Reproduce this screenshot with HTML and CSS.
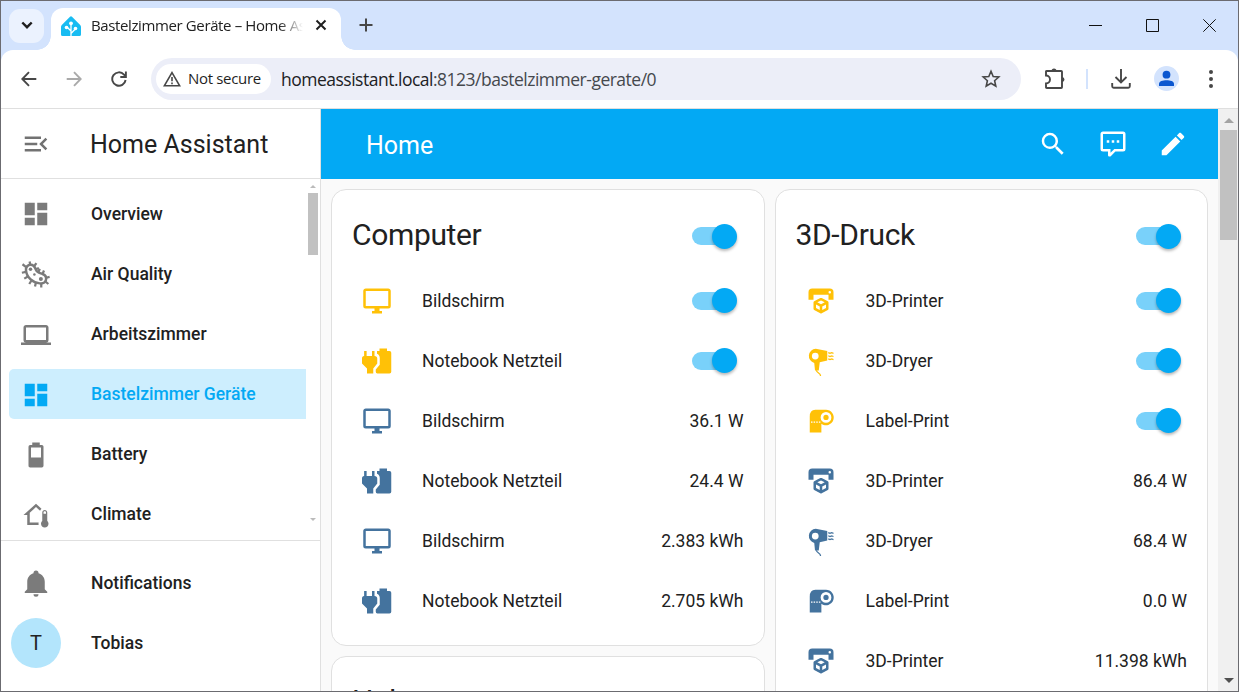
FILE: index.html
```html
<!DOCTYPE html>
<html lang="en">
<head>
<meta charset="utf-8">
<title>Bastelzimmer Geräte – Home Assistant</title>
<link rel="stylesheet" href="styles.css">
</head>
<body>
<svg class="defs" aria-hidden="true">
  <symbol id="dashboard" viewBox="0 0 24 24"><path d="M13,3V9H21V3M13,21H21V11H13M3,21H11V15H3M3,13H11V3H3V13Z"/></symbol>
  <symbol id="monitor" viewBox="0 0 24 24"><path d="M21,16H3V4H21M21,2H3C1.89,2 1,2.89 1,4V16A2,2 0 0,0 3,18H10V20H8V22H16V20H14V18H21A2,2 0 0,0 23,16V4C23,2.89 22.1,2 21,2Z"/></symbol>
  <symbol id="plug" viewBox="0 0 24 24"><path d="M1.7 4H3.7V8H8V4H10V8C11.4 8 12.2 8.8 12.2 10V14L9 18V22H4V18L0 14V10C0 8.8 .5 8 1.7 8Z"/><path d="M14 4V2H20V4H22Q23.4 4 23.4 5.4V20.6Q23.4 22 22 22H12.3Q11 22 11 20.6V18.8L14.2 15V9.5C14.2 7.8 13.2 6.7 12 6.2V4Z"/></symbol>
  <symbol id="printer" viewBox="0 0 24 24"><path d="M19,6A1,1 0 0,0 20,5A1,1 0 0,0 19,4A1,1 0 0,0 18,5A1,1 0 0,0 19,6M19,2A3,3 0 0,1 22,5V11H18V7H6V11H2V5A3,3 0 0,1 5,2H19M18,18.25C18,18.63 17.79,18.96 17.47,19.13L12.57,21.82C12.4,21.94 12.21,22 12,22C11.79,22 11.59,21.94 11.43,21.82L6.53,19.13C6.21,18.96 6,18.63 6,18.25V13C6,12.62 6.21,12.29 6.53,12.12L11.43,9.68C11.59,9.56 11.79,9.5 12,9.5C12.21,9.5 12.4,9.56 12.57,9.68L17.47,12.12C17.79,12.29 18,12.62 18,13V18.25M12,11.65L9.04,13L12,14.6L14.96,13L12,11.65M8,17.66L11,19.29V16.33L8,14.71V17.66M16,17.66V14.71L13,16.33V19.29L16,17.66Z"/></symbol>
  <symbol id="dryer" viewBox="0 0 24 24"><path fill-rule="evenodd" d="M7.8 2.2L17 4V11.5L11 13L10.2 19.6H7.2L6.6 13.6A5.8 5.8 0 0 1 7.8 2.2M7.4 5.3A2.7 2.7 0 1 0 7.4 10.7A2.7 2.7 0 1 0 7.4 5.3"/><path class="line" d="M8.3 19.4C8.2 21.5 11.6 21.4 11.7 24M17.8 5.3l1.4.6 1.3-.5 1.5.5M17.8 7.8l1.4.6 1.3-.5 1.5.5M17.8 10.3l1.4.6 1.3-.5 1.5.5"/></symbol>
  <symbol id="roll" viewBox="0 0 24 24"><path fill-rule="evenodd" d="M7.5 3H16A6.2 6.2 0 1 1 12.3 14.2V21.2H3V8.5Q3 3 7.5 3M16 4.8A4.3 4.3 0 1 0 16 13.4A4.3 4.3 0 1 0 16 4.8M4 12.3V13.3H5.2V12.3M6.1 12.3V13.3H7.3V12.3M8.2 12.3V13.3H9.4V12.3M10.3 12.3V13.3H11.5V12.3"/><circle cx="16" cy="9.1" r="2.1"/></symbol>
</svg>

<div class="window">
  <header class="tabstrip">
    <button class="tab-search"><svg viewBox="0 0 14 14"><path d="M2.3 4.5L7 9.2L11.7 4.5"/></svg></button>
    <div class="tab">
      <svg class="favicon" viewBox="0 0 20 20"><path fill="#18bcf2" d="M10 .2Q10.6.2 11 .7L19.2 9Q20 10 20 11V18.5Q20 20 18.5 20H1.5Q0 20 0 18.5V11Q0 10 .8 9L9 .7Q9.4.2 10 .2"/><g fill="none" stroke="#fff" stroke-width="1.3"><path d="M10 20V7.5M10 15L5.7 10.8M10 17.5L14.3 13"/></g><g fill="#fff"><circle cx="10" cy="7.3" r="1.9"/><circle cx="5.5" cy="11.5" r="1.8"/><circle cx="14.5" cy="12.5" r="1.8"/></g></svg>
      <span class="tab-title">Bastelzimmer Geräte – Home Assistant</span>
      <svg class="tab-close" viewBox="0 0 12 12"><path d="M1.5 1.5L10.5 10.5M10.5 1.5L1.5 10.5"/></svg>
    </div>
    <svg class="new-tab" viewBox="0 0 14 14"><path d="M7 .5V13.5M.5 7H13.5"/></svg>
    <div class="win-controls">
      <svg viewBox="0 0 13 13"><path d="M0 6.5H13"/></svg>
      <svg viewBox="0 0 13 13"><path d="M.5 .5H12.5V12.5H.5Z"/></svg>
      <svg viewBox="0 0 13 13"><path d="M.3 .3L12.7 12.7M12.7 .3L.3 12.7"/></svg>
    </div>
  </header>

  <div class="toolbar">
    <svg class="nav" viewBox="0 0 16 16"><path d="M15.3 8H1.5M8 1.2L1.3 8L8 14.8"/></svg>
    <svg class="nav dim" viewBox="0 0 16 16"><path d="M.7 8H14.5M8 1.2L14.7 8L8 14.8"/></svg>
    <svg class="nav" viewBox="0 0 16 16"><path d="M14.6 9A6.7 6.7 0 1 1 13 3.6L14.6 5.4M14.9 .6V6H9.3"/></svg>
    <div class="omnibox">
      <div class="chip"><svg viewBox="0 0 18 16"><path d="M9 1.6L16.7 14.8H1.3ZM9 6V10.3M9 11.6V13.2"/></svg><span>Not secure</span></div>
      <span class="url">homeassistant.local<span>:8123/bastelzimmer-gerate/0</span></span>
      <svg class="star" viewBox="0 0 20 20"><path d="M10 2.3L12.2 7.5L17.8 8L13.6 11.7L14.8 17.2L10 14.3L5.2 17.2L6.4 11.7L2.2 8L7.8 7.5Z"/></svg>
    </div>
    <svg class="puzzle" viewBox="0 0 22 22"><path d="M2 3.5Q2 3 2.8 3H17.2Q18 3 18 3.8V19.2Q18 20 17.2 20H2.8Q2 20 2 19.2V15.5A4 4 0 0 0 2 7.5Z"/><path class="solid" d="M7.5 3A2.4 2.4 0 0 1 12.5 3M18 9A2.5 2.5 0 0 1 18 14"/></svg>
    <i class="divider"></i>
    <svg class="download" viewBox="0 0 20 20"><path d="M10 0V13M4.5 8L10 13.4L15.5 8M1.2 14V17.3Q1.2 18.8 2.7 18.8H17.3Q18.8 18.8 18.8 17.3V14"/></svg>
    <svg class="profile" viewBox="0 0 25 25"><circle cx="12.5" cy="12.5" r="12.5" fill="#d3e3fd"/><circle cx="12.5" cy="8.7" r="3.9"/><path d="M5 20V17.6C5 13 20 13 20 17.6V20Z"/></svg>
    <svg class="kebab" viewBox="0 0 4 18"><circle cx="2" cy="2" r="2"/><circle cx="2" cy="9" r="2"/><circle cx="2" cy="16" r="2"/></svg>
  </div>

  <div class="page">
    <aside class="sidebar">
      <div class="brand"><svg class="icon" viewBox="0 0 24 24"><path d="M21,15.61L19.59,17L14.58,12L19.59,7L21,8.39L17.44,12L21,15.61M3,6H16V8H3V6M3,13V11H13V13H3M3,18V16H16V18H3Z"/></svg><span>Home Assistant</span></div>
      <div class="menu">
        <nav class="items">
          <a class="item"><svg class="icon"><use href="#dashboard"/></svg>Overview</a>
          <a class="item"><svg class="icon bacteria" viewBox="0 0 24 24"><path class="outline" d="M4.8 9.3C4.4 6.4 6.2 4.6 8.5 4.6C11.4 4.6 12.1 6.8 12.9 8.9S15.5 11.1 18 12S21.3 15 20.7 17S18.2 19.8 15.8 19.5C10.3 18.9 5.5 15 4.8 9.3Z"/><path class="spikes" d="M8.2 4.7L7.7 2M11.3 5.8L13.1 3.3M4.9 6.5L2 4.2M4.7 10.3L1.5 11M6.3 14L3.4 15.7M9.2 17.2L7.4 20M12.7 19L12 22M17 19.6V22.7M20.3 18L22.7 20M20.9 15L23.7 14.3M18 12L19.2 9.2M14.7 10.7L15.8 7.8M12.7 8.2L15.1 7.2"/><circle cx="8.4" cy="8.2" r="1.4"/><circle cx="16.7" cy="16" r="1.6"/><circle cx="11.5" cy="12.3" r="1"/></svg>Air Quality</a>
          <a class="item"><svg class="icon" viewBox="0 0 24 24"><path d="M4,6H20V16H4M20,18A2,2 0 0,0 22,16V6C22,4.89 21.1,4 20,4H4C2.89,4 2,4.89 2,6V16A2,2 0 0,0 4,18H0V20H24V18H20Z"/></svg>Arbeitszimmer</a>
          <a class="item selected"><svg class="icon"><use href="#dashboard"/></svg>Bastelzimmer Geräte</a>
          <a class="item"><svg class="icon" viewBox="0 0 24 24"><path d="M16,14H8V6H16M16.67,4H15V2H9V4H7.33A1.33,1.33 0 0,0 6,5.33V20.67C6,21.4 6.6,22 7.33,22H16.67A1.33,1.33 0 0,0 18,20.67V5.33C18,4.6 17.4,4 16.67,4Z"/></svg>Battery</a>
          <a class="item"><svg class="icon" viewBox="0 0 24 24"><path d="M19 8C20.11 8 21 8.9 21 10V16.76C21.61 17.31 22 18.11 22 19C22 20.66 20.66 22 19 22C17.34 22 16 20.66 16 19C16 18.11 16.39 17.31 17 16.76V10C17 8.9 17.9 8 19 8M19 9C18.45 9 18 9.45 18 10V11H20V10C20 9.45 19.55 9 19 9M5 20V12H2L12 3L16.4 6.96C15.89 7.4 15.5 7.97 15.25 8.61L12 5.69L7 10.19V18H14.1L14 19L14.1 20H5Z"/></svg>Climate</a>
        </nav>
        <div class="mini-scroll"><i class="up"></i><i class="thumb"></i><i class="down"></i></div>
      </div>
      <nav class="items footer">
        <a class="item"><svg class="icon" viewBox="0 0 24 24"><path d="M21,19V20H3V19L5,17V11C5,7.9 7.03,5.17 10,4.29C10,4.19 10,4.1 10,4A2,2 0 0,1 12,2A2,2 0 0,1 14,4C14,4.1 14,4.19 14,4.29C16.97,5.17 19,7.9 19,11V17L21,19M14,21A2,2 0 0,1 12,23A2,2 0 0,1 10,21"/></svg>Notifications</a>
        <a class="item user"><span class="avatar">T</span>Tobias</a>
      </nav>
    </aside>

    <main class="main">
      <div class="appbar">
        <span class="view">Home</span>
        <svg class="icon" viewBox="0 0 24 24"><path d="M9.5,3A6.5,6.5 0 0,1 16,9.5C16,11.11 15.41,12.59 14.44,13.73L14.71,14H15.5L20.5,19L19,20.5L14,15.5V14.71L13.73,14.44C12.59,15.41 11.11,16 9.5,16A6.5,6.5 0 0,1 3,9.5A6.5,6.5 0 0,1 9.5,3M9.5,5C7,5 5,7 5,9.5C5,12 7,14 9.5,14C12,14 14,12 14,9.5C14,7 12,5 9.5,5Z"/></svg>
        <svg class="icon" viewBox="0 0 24 24"><path d="M9,22A1,1 0 0,1 8,21V18H4A2,2 0 0,1 2,16V4C2,2.89 2.9,2 4,2H20A2,2 0 0,1 22,4V16A2,2 0 0,1 20,18H13.9L10.2,21.71C10,21.9 9.75,22 9.5,22V22H9M10,16V19.08L13.08,16H20V4H4V16H10M17,11H15V9H17V11M13,11H11V9H13V11M9,11H7V9H9V11Z"/></svg>
        <svg class="icon" viewBox="0 0 24 24"><path d="M20.71,7.04C21.1,6.65 21.1,6 20.71,5.63L18.37,3.29C18,2.9 17.35,2.9 16.96,3.29L15.12,5.12L18.87,8.87M3,17.25V21H6.75L17.81,9.93L14.06,6.18L3,17.25Z"/></svg>
      </div>
      <div class="columns">
        <div class="column">
          <section class="card">
            <h2><span>Computer</span><i class="toggle"></i></h2>
            <div class="row on"><svg class="icon"><use href="#monitor"/></svg><span>Bildschirm</span><i class="toggle"></i></div>
            <div class="row on"><svg class="icon"><use href="#plug"/></svg><span>Notebook Netzteil</span><i class="toggle"></i></div>
            <div class="row"><svg class="icon"><use href="#monitor"/></svg><span>Bildschirm</span><b>36.1 W</b></div>
            <div class="row"><svg class="icon"><use href="#plug"/></svg><span>Notebook Netzteil</span><b>24.4 W</b></div>
            <div class="row"><svg class="icon"><use href="#monitor"/></svg><span>Bildschirm</span><b>2.383 kWh</b></div>
            <div class="row"><svg class="icon"><use href="#plug"/></svg><span>Notebook Netzteil</span><b>2.705 kWh</b></div>
          </section>
          <section class="card">
            <h2 class="plain"><span>Hub</span></h2>
          </section>
        </div>
        <div class="column">
          <section class="card">
            <h2><span>3D-Druck</span><i class="toggle"></i></h2>
            <div class="row on"><svg class="icon"><use href="#printer"/></svg><span>3D-Printer</span><i class="toggle"></i></div>
            <div class="row on"><svg class="icon"><use href="#dryer"/></svg><span>3D-Dryer</span><i class="toggle"></i></div>
            <div class="row on"><svg class="icon"><use href="#roll"/></svg><span>Label-Print</span><i class="toggle"></i></div>
            <div class="row"><svg class="icon"><use href="#printer"/></svg><span>3D-Printer</span><b>86.4 W</b></div>
            <div class="row"><svg class="icon"><use href="#dryer"/></svg><span>3D-Dryer</span><b>68.4 W</b></div>
            <div class="row"><svg class="icon"><use href="#roll"/></svg><span>Label-Print</span><b>0.0 W</b></div>
            <div class="row"><svg class="icon"><use href="#printer"/></svg><span>3D-Printer</span><b>11.398 kWh</b></div>
          </section>
        </div>
      </div>
    </main>
    <div class="scrollbar"><i class="up"></i><i class="thumb"></i><i class="down"></i></div>
  </div>
</div>
</body>
</html>
```
FILE: styles.css
```css
* { box-sizing: border-box; }
body { margin: 0; overflow: hidden; font-family: Roboto, sans-serif; color: #212121; }
svg { display: block; flex: none; }
.defs { display: none; }
.window { height: 692px; border: 1px solid #6b6b70; display: flex; flex-direction: column; overflow: hidden; background: #d3e3fd; }

/* Browser tab strip */
.tabstrip { height: 49px; flex: none; display: flex; align-items: center; padding-left: 8px; font-family: "Open Sans", sans-serif; }
.tab-search { width: 35px; height: 34px; border: 0; border-radius: 11px; background: #ebf2fe; padding: 0; display: flex; align-items: center; justify-content: center; }
.tab-search svg { width: 14px; height: 14px; margin-bottom: 2px; fill: none; stroke: #1f1f1f; stroke-width: 2.4; }
.tab { position: relative; width: 290px; height: 42px; align-self: flex-end; margin-left: 7px; border-radius: 12px 12px 0 0; background: #fff; display: flex; align-items: center; padding: 0 14px 7px 10px; }
.tab::before, .tab::after { content: ""; position: absolute; bottom: 0; width: 14px; height: 14px; }
.tab::before { left: -14px; background: radial-gradient(circle at 0 0, transparent 13.5px, #fff 14px); }
.tab::after { right: -14px; background: radial-gradient(circle at 100% 0, transparent 13.5px, #fff 14px); }
.favicon { width: 20px; height: 20px; }
.tab-title { width: 212px; margin: 0 0 1px 10px; font-size: 15px; letter-spacing: -.38px; overflow: hidden; white-space: nowrap; -webkit-mask-image: linear-gradient(90deg, #000 188px, transparent 212px); mask-image: linear-gradient(90deg, #000 188px, transparent 212px); }
.tab-close { width: 12px; height: 12px; margin: 0 0 1px 12px; fill: none; stroke: #1f1f1f; stroke-width: 2; }
.new-tab { width: 14px; height: 14px; margin: 0 0 1px 18px; fill: none; stroke: #474747; stroke-width: 2; }
.win-controls { margin-left: auto; display: flex; gap: 44px; padding-right: 22px; }
.win-controls svg { width: 13px; height: 13px; fill: none; stroke: #111; }

/* Browser toolbar */
.toolbar { height: 59px; flex: none; background: #fff; border-bottom: 1px solid #dfdfdf; border-radius: 12px 12px 0 0; display: flex; align-items: center; padding: 0 25px 0 20px; font-family: "Open Sans", sans-serif; }
.toolbar > svg, .chip svg, .star { fill: none; stroke: #474747; stroke-width: 1.9; }
.nav { width: 16px; height: 16px; margin-right: 29px; }
.toolbar > .dim { stroke: #aaa; }
.omnibox { width: 870px; height: 42px; margin-left: -5px; border-radius: 21px; background: #eceef8; display: flex; align-items: center; padding: 0 20px 0 5px; }
.chip { width: 115px; height: 30px; border-radius: 15px; background: #fff; display: flex; align-items: center; padding-left: 7px; font-size: 15px; font-weight: 500; color: #1f1f1f; }
.chip svg { width: 18px; height: 16px; margin-right: 7px; stroke-width: 1.6; }
.chip span { white-space: nowrap; letter-spacing: -.32px; margin-bottom: 2px; }
.url { margin-left: 10px; font-size: 17.5px; letter-spacing: -.5px; white-space: nowrap; color: #202124; }
.url span { color: #45484d; }
.star { width: 20px; height: 20px; margin-left: auto; stroke-width: 1.6; }
.puzzle { width: 22px; height: 22px; margin: 0 -1px 0 23px; }
.puzzle .solid { fill: #474747; stroke: none; }
.divider { width: 2px; height: 20px; margin-left: 21px; background: #d3e3fd; }
.download { width: 20px; height: 20px; margin-left: 23px; }
.toolbar .profile { width: 25px; height: 25px; margin: 0 0 1px 23px; fill: #0b57d0; stroke: none; }
.toolbar .kebab { width: 4px; height: 18px; margin-left: auto; fill: #474747; stroke: none; }

/* Page */
.page { flex: 1; min-height: 0; display: flex; background: #fafafa; }
.icon { width: 30px; height: 30px; fill: currentColor; }
.line { fill: none; stroke: currentColor; stroke-width: 1; }
.outline { fill: none; stroke: currentColor; stroke-width: 2; }
.spikes { fill: none; stroke: currentColor; stroke-width: 1.8; }

.sidebar { width: 320px; background: #fff; border-right: 1px solid #e0e0e0; display: flex; flex-direction: column; }
.brand { height: 70px; flex: none; border-bottom: 1px solid #e0e0e0; display: flex; align-items: center; padding-left: 20px; font-size: 25px; }
.brand span { padding-top: 2px; }
.brand .icon { color: #727272; margin-right: 39px; }
.menu { height: 362px; flex: none; border-bottom: 1px solid #e0e0e0; display: flex; overflow: hidden; }
.items { flex: 1; display: flex; flex-direction: column; gap: 10px; padding: 10px 1px 0 8px; }
.item { height: 50px; flex: none; display: flex; align-items: center; gap: 40px; padding-left: 12px; font-size: 17.5px; font-weight: 500; border-radius: 5px 0 0 5px; }
.item .icon { color: #7b7b7b; margin-top: 1px; }
.item:first-child .icon { margin-top: 0; margin-bottom: 1px; }
.item .bacteria { margin: 0 1px 1px -1px; }
.selected { background: #cdeefe; color: #03a9f4; }
.selected .icon { color: #03a9f4; }
.footer { padding-top: 17px; }
.item.user { padding-left: 2px; gap: 30px; }
.avatar { width: 50px; height: 50px; border-radius: 50%; background: #b3e5fc; display: flex; align-items: center; justify-content: center; font-size: 20px; font-weight: 400; }
.mini-scroll { width: 13px; display: flex; flex-direction: column; align-items: center; padding: 6px 1px 19px 0; }
.mini-scroll .thumb { width: 10px; height: 62px; background: #c1c1c1; margin-top: 5px; }
.mini-scroll .up, .mini-scroll .down { border: 3px solid transparent; }
.mini-scroll .up { border-top: 0; border-bottom-color: #bbb; }
.mini-scroll .down { border-bottom: 0; border-top-color: #bbb; margin-top: auto; }

.main { flex: 1; min-width: 0; display: flex; flex-direction: column; }
.appbar { height: 70px; flex: none; background: #03a9f4; color: #fff; display: flex; align-items: center; gap: 30px; padding: 0 30px 0 45px; font-size: 25px; }
.view { margin-right: auto; padding-top: 2px; }
.columns { flex: 1; min-height: 0; display: flex; gap: 10px; padding: 10px 10px 0; overflow: hidden; }
.column { flex: 1; display: flex; flex-direction: column; gap: 10px; }
.card { flex: none; background: #fff; border: 1px solid #e0e0e0; border-radius: 15px; padding: 0 20px 10px; }
.card h2 { height: 85px; margin: 0; display: flex; align-items: center; justify-content: space-between; font-size: 30px; font-weight: 400; letter-spacing: -.35px; }
.card h2 span { padding-top: 4px; }
.card h2.plain span { padding-top: 2px; }
.card h2 .toggle { margin-top: 7px; }
.row { height: 50px; margin-bottom: 10px; display: flex; align-items: center; font-size: 17.5px; padding-left: 10px; }
.row span, .row b { padding-top: 2px; }
.row .icon { color: #44739e; margin-right: 30px; margin-top: 1px; }
.row.on .icon { color: #ffc107; }
.row b { margin-left: auto; font-weight: 400; }
.toggle { position: relative; width: 45px; height: 25px; margin: 1px 6.5px 0 auto; }
.toggle::before { content: ""; position: absolute; left: 0; top: 3.5px; width: 42px; height: 18px; border-radius: 9px; background: #79d1fa; }
.toggle::after { content: ""; position: absolute; right: 0; top: 0; width: 25px; height: 25px; border-radius: 50%; background: #03a9f4; box-shadow: 0 2px 3px rgba(0,0,0,.28); }
.column:first-child .toggle { margin-right: 7px; }

.scrollbar { width: 20px; background: #f0f0f0; display: flex; flex-direction: column; align-items: center; padding: 9px 1px 8px 2px; }
.scrollbar .up, .scrollbar .down { border: 5px solid transparent; }
.scrollbar .up { border-top: 0; border-bottom-color: #a3a3a3; }
.scrollbar .down { border-bottom: 0; border-top-color: #505050; margin-top: auto; }
.scrollbar .thumb { width: 17px; height: 110px; background: #c1c1c1; margin-top: 7px; }
```
